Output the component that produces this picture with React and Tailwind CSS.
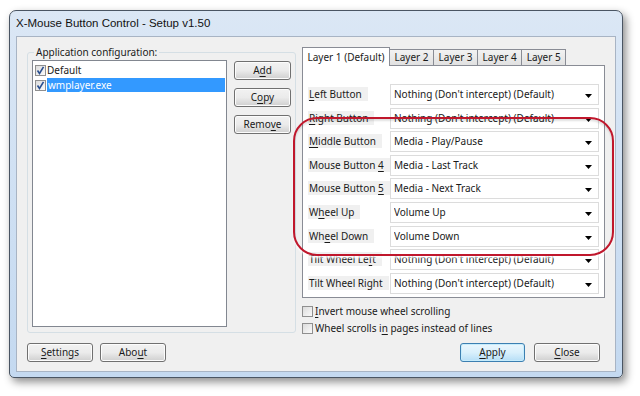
import React from 'react';

const FONT = { fontFamily: '"Noto Sans", "Liberation Sans", sans-serif' };

const Btn = ({ children, isDefault, className = '' }) => (
  <div
    className={`flex items-center justify-center h-[19px] rounded-[3px] border text-[10px] text-[#1a1a1a] ${
      isDefault
        ? 'border-[#3c7fb1] bg-gradient-to-b from-[#eaf6fd] via-[#d9f0fc] to-[#b6def6] shadow-[inset_0_0_0_1px_#c6ecfc]'
        : 'border-[#707070] bg-gradient-to-b from-[#f2f2f2] via-[#ebebeb] to-[#cfcfcf] shadow-[inset_0_0_0_1px_#fcfcfc]'
    } ${className}`}
  >
    {children}
  </div>
);

const U = ({ children }) => <span className="underline underline-offset-2">{children}</span>;

const Check = ({ checked }) => (
  <div className="w-[11px] h-[11px] border border-[#8f8f8f] bg-gradient-to-br from-[#dcdcdc] to-[#fafafa] flex items-center justify-center shrink-0">
    {checked && (
      <svg width="9" height="9" viewBox="0 0 9 9">
        <path d="M1.5 4.5 L3.5 7.5 L7.5 0.8" fill="none" stroke="#2a4f8f" strokeWidth="1.6" />
      </svg>
    )}
  </div>
);

const Combo = ({ value }) => (
  <div className="w-[209px] h-[21px] bg-white border border-[#dcdcdc] flex items-center pl-[3px] pr-[6px] text-[10px] text-[#1a1a1a]">
    <span className="flex-1 truncate">{value}</span>
    <svg width="7" height="4" viewBox="0 0 7 4" className="mt-[3px]">
      <path d="M0 0 L7 0 L3.5 4 Z" fill="#000" />
    </svg>
  </div>
);

const rows = [
  [<><U>L</U>eft Button</>, "Nothing (Don't intercept) (Default)"],
  [<><U>R</U>ight Button</>, "Nothing (Don't intercept) (Default)"],
  [<><U>M</U>iddle Button</>, 'Media - Play/Pause'],
  [<>Mouse Button <U>4</U></>, 'Media - Last Track'],
  [<>Mouse Button <U>5</U></>, 'Media - Next Track'],
  [<>W<U>h</U>eel Up</>, 'Volume Up'],
  [<>Wh<U>e</U>el Down</>, 'Volume Down'],
  [<>Tilt Wheel Le<U>f</U>t</>, "Nothing (Don't intercept) (Default)"],
  [<>Tilt Wheel Right</>, "Nothing (Don't intercept) (Default)"],
];

const tabs = ['Layer 2', 'Layer 3', 'Layer 4', 'Layer 5'];

export default function App() {
  return (
    <div className="relative w-[640px] h-[396px] bg-white overflow-hidden pt-[10px] pl-[9px]" style={FONT}>
      {/* window frame */}
      <div className="w-[614px] h-[368px] rounded-t-[7px] rounded-b-[5px] border border-[#4a5563] bg-gradient-to-b from-[#dbe7f5] via-[#cfe0f3] to-[#c4d9f0] shadow-[3px_4px_8px_rgba(0,0,0,0.45)] flex flex-col">
        <div
          className="h-[25px] flex items-center pl-[6px] text-[11.5px] text-[#111] pt-[1px]"
          style={{ fontFamily: '"Liberation Sans", "Noto Sans", sans-serif' }}
        >
          X-Mouse Button Control - Setup v1.50
        </div>

        {/* client area */}
        <div className="mx-[6px] h-[336px] bg-[#f0f0f0] border border-[#a8b4c4] flex text-[10px] text-[#1a1a1a]">
          {/* left column */}
          <div className="flex flex-col pl-[10px] pt-[9px]">
            <fieldset className="w-[269px] h-[287px] border border-[#d5dfe5] rounded-[3px] px-[4px] pb-[3px]">
              <legend className="px-[2px] ml-[2px] leading-[12px]">Application configuration:</legend>
              <div className="flex gap-[7px] mt-[2px]">
                <div className="w-[195px] h-[267px] bg-white border border-[#828790] pt-[2px] pl-[2px]">
                  <div className="flex items-center gap-[1px] h-[14px]">
                    <Check checked />
                    <span>Default</span>
                  </div>
                  <div className="flex items-center gap-[1px] h-[14px] mt-[1px]">
                    <Check checked />
                    <span className="flex-1 bg-[#3399ff] text-white leading-[14px] pl-[1px] mr-[1px]">wmplayer.exe</span>
                  </div>
                </div>
                <div className="flex flex-col gap-[8px] pt-[1px]">
                  <Btn className="w-[57px]">A<U>d</U>d</Btn>
                  <Btn className="w-[57px]">C<U>o</U>py</Btn>
                  <Btn className="w-[57px]">Remo<U>v</U>e</Btn>
                </div>
              </div>
            </fieldset>
            <div className="flex gap-[7px] mt-[10px]">
              <Btn className="w-[66px]"><U>S</U>ettings</Btn>
              <Btn className="w-[66px]">Abo<U>u</U>t</Btn>
            </div>
          </div>

          {/* right column */}
          <div className="flex flex-col ml-[6px] pt-[10px]">
            <div className="flex items-end h-[18px]">
              <div className="h-[19px] px-[4.5px] bg-white border border-b-0 border-[#898c95] flex items-center relative top-[1px] z-10">
                Layer 1 (Default)
              </div>
              {tabs.map((t) => (
                <div
                  key={t}
                  className="h-[16px] px-[4.5px] -ml-px bg-gradient-to-b from-[#f2f2f2] to-[#e1e1e1] border border-b-0 border-[#898c95] flex items-center"
                >
                  {t}
                </div>
              ))}
            </div>
            <div className="w-[303px] h-[233px] bg-white border border-[#898c95] pt-[18px] pl-[5px] flex flex-col gap-[2.6px]">
              {rows.map(([label, value], i) => (
                <div key={i} className="flex items-center h-[21px]">
                  <div className="w-[82px] whitespace-nowrap">
                    <span className="bg-[#f0f0f0] pr-[6px] pl-[1px]">{label}</span>
                  </div>
                  <Combo value={value} />
                </div>
              ))}
            </div>
            <div className="flex flex-col gap-[5px] mt-[7px]">
              <div className="flex items-center gap-[2px] h-[12px]">
                <Check />
                <span><U>I</U>nvert mouse wheel scrolling</span>
              </div>
              <div className="flex items-center gap-[2px] h-[12px]">
                <Check />
                <span>Wheel scrolls i<U>n</U> pages instead of lines</span>
              </div>
            </div>
            <div className="flex justify-end gap-[9px] mt-[9px] pr-[5px]">
              <Btn isDefault className="w-[65px]"><U>A</U>pply</Btn>
              <Btn className="w-[66px]"><U>C</U>lose</Btn>
            </div>
          </div>
        </div>
      </div>

      {/* red annotation */}
      <div className="absolute left-[293px] top-[117px] w-[321px] h-[139px] rounded-[24px] border-2 border-[#c0172c] shadow-[0_2px_2px_rgba(255,255,255,0.8),inset_0_2px_2px_rgba(0,0,0,0.12)] pointer-events-none" />
    </div>
  );
}
